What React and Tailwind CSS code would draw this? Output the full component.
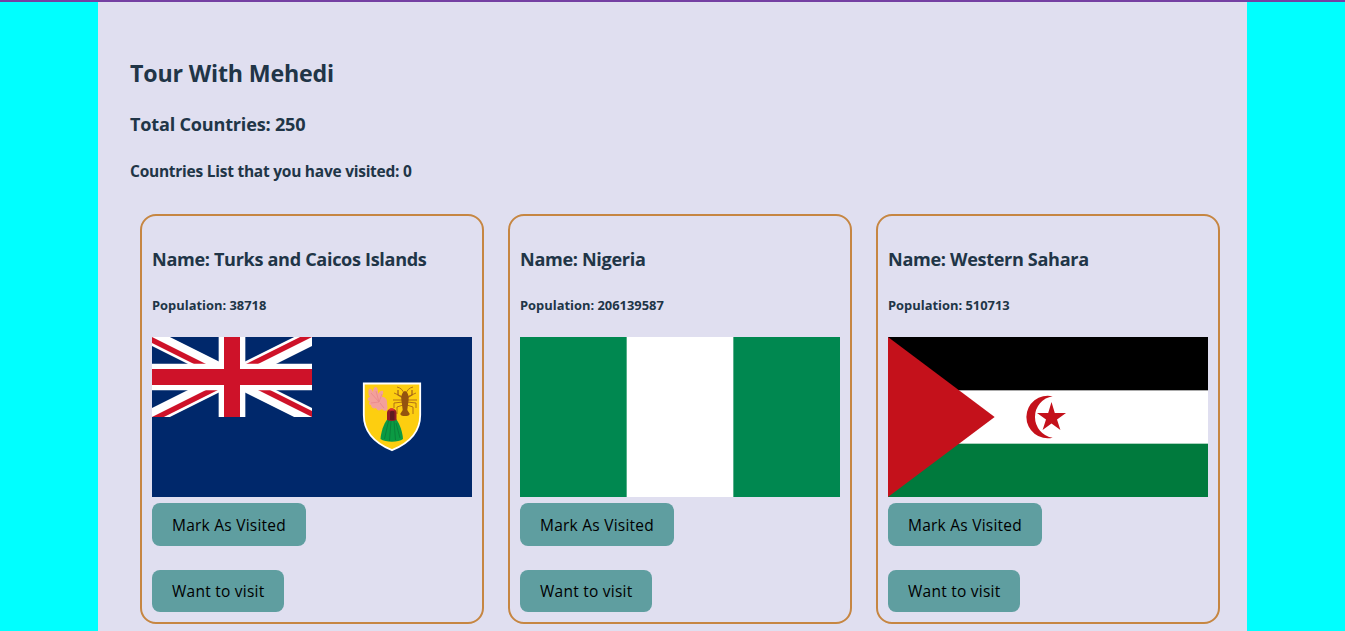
const flagClass = "block h-[160px] w-[320px]";

function TurksFlag() {
  return (
    <svg className={flagClass} viewBox="0 0 320 160">
      <defs>
        <clipPath id="canton"><path d="M0 0h60v30H0z" /></clipPath>
        <clipPath id="quarters"><path d="M30 15h30v15zv15H0zH0V0zV0h30z" /></clipPath>
      </defs>
      <rect width="320" height="160" fill="#00286b" />
      <g transform="scale(2.66667)" clipPath="url(#canton)">
        <path d="M0 0l60 30M60 0L0 30" stroke="#fff" strokeWidth="6" />
        <path d="M0 0l60 30M60 0L0 30" stroke="#ce1229" strokeWidth="4" clipPath="url(#quarters)" />
        <path d="M30 0v30M0 15h60" stroke="#fff" strokeWidth="10" />
        <path d="M30 0v30M0 15h60" stroke="#ce1229" strokeWidth="6" />
      </g>
      <path d="M211.8 46.5h56.4V78c0 18-13 29-28.2 35.200C224.800 107 211.800 96 211.800 78z" fill="#fdce10" stroke="#fff" strokeWidth="1.8" />
      <path d="M217 52c2-1 3 1 4 3 0-3 1-5 3-5 2 1 2 4 2 7 1-2 3-4 5-3 1 2-1 4-1 6 3 0 5 2 5 5s1 6 0 8c-2 2-4 0-5-1-2 2-5 2-6-1-2 1-5 0-5-3-2 0-3-2-1-4-3 0-3-4 0-4-2-2-2-6-1-8z" fill="#f3a09b" />
      <path d="M219 56l8 9M224 54l3 11M230 57l-3 8M219 66l8-1M228 66l4 5" stroke="#e8888c" strokeWidth=".8" fill="none" />
      <g stroke="#a8681a" fill="none" strokeWidth=".9">
        <path d="M252 57c-1-4-3-6-7-7M254 57c1-4 3-6 7-7M251 60l-9-4M255 60l9-4M251 63h-10M255 63h10M251 65l-9 1v5M255 65l9 1v5M251 68l-6 2v7M255 68l6 2v7" />
        <path d="M251 61l-5-3v-5M255 61l5-3v-5" strokeWidth="1.300" />
      </g>
      <path d="M253 54c3 1 4 5 3.600 9l-1.300 10 2.500 4c-1 2-2.600 2-4.800 2s-3.800 0-4.800-2l2.500-4-1.300-10c-.4-4 .6-8 3.600-9z" fill="#94530f" />
      <path d="M235.500 82c-4 5-6.500 13-7 20 5 3.500 18 3.500 22.500 0-.5-7-3-15-7-20z" fill="#0b9a43" />
      <path d="M236.500 84l-4 18M239 84l-1.500 20M242 84l1.500 19M244 86l4 15" stroke="#087535" strokeWidth=".7" />
      <path d="M235 83v-7c0-6 9.500-6 9.500 0v7c-3 1.300-6.500 1.300-9.500 0z" fill="#941c24" />
      <path d="M238 83v-7c0-3 4.500-3 4.500 0v7z" fill="#5e1920" />
      <path d="M236.500 73.500c1-3 5-3 6 0z" fill="#e03237" />
    </svg>
  );
}

function NigeriaFlag() {
  return (
    <svg className={flagClass} viewBox="0 0 320 160">
      <rect width="320" height="160" fill="#008850" />
      <rect x="106.670" width="106.670" height="160" fill="#fff" />
    </svg>
  );
}

function SaharaFlag() {
  return (
    <svg className={flagClass} viewBox="0 0 320 160">
      <rect width="320" height="160" fill="#fff" />
      <rect width="320" height="53.330" />
      <rect y="106.670" width="320" height="53.330" fill="#007a3d" />
      <path d="M0 0l106.670 80L0 160z" fill="#c4111b" />
      <path d="M164.700 59.300A21.300 21.300 0 1 0 164.700 100.700A20.950 20.950 0 0 1 164.700 59.300z" fill="#c4111b" />
      <path d="M163.500 65l3.300 11h11.200l-9 6.400 3.400 10.600-8.900-6.600-8.900 6.600 3.400-10.600-9-6.400h11.200z" fill="#c4111b" />
    </svg>
  );
}

const countries = [
  { name: "Turks and Caicos Islands", population: 38718, Flag: TurksFlag },
  { name: "Nigeria", population: 206139587, Flag: NigeriaFlag },
  { name: "Western Sahara", population: 510713, Flag: SaharaFlag },
];

const buttonClass = "block h-[42.4px] rounded-lg bg-[#5f9ea0] px-5 pt-px text-[15.5px] leading-6 tracking-[0.24px] text-black";

function Country({ name, population, Flag }) {
  return (
    <article className="h-[410px] w-[344px] shrink-0 rounded-2xl border-2 border-[#c68642] px-[10px] pt-[29px]">
      <h3 className="text-[18.1px] font-bold leading-7 tracking-[-0.33px]">{`Name: ${name}`}</h3>
      <h5 className="mt-[22px] text-[12.9px] font-bold leading-5">{`Population: ${population}`}</h5>
      <div className="mt-[22px]"><Flag /></div>
      <button className={`${buttonClass} mt-[6.4px]`}>Mark As Visited</button>
      <button className={`${buttonClass} mt-6`}>Want to visit</button>
    </article>
  );
}

export default function App() {
  return (
    <div className="h-[631px] overflow-hidden border-t-2 border-[#7540a3] bg-[#00ffff] font-['Open_Sans',sans-serif] text-[#213547]">
      <main className="ml-[98px] h-full w-[1149px] bg-[#e0dff0] px-8 pt-[53px]">
        <h2 className="text-[23.2px] font-bold leading-9 tracking-[-0.17px]">Tour With Mehedi</h2>
        <h3 className="mt-[19px] text-[18.1px] font-bold leading-7 tracking-[-0.2px]">Total Countries: 250</h3>
        <h4 className="mt-[21px] text-[15.5px] font-bold leading-6 tracking-[-0.25px]">Countries List that you have visited: 0</h4>
        <div className="ml-[10px] mt-[31px] flex gap-6">
          {countries.map((c) => <Country key={c.name} {...c} />)}
        </div>
      </main>
    </div>
  );
}
